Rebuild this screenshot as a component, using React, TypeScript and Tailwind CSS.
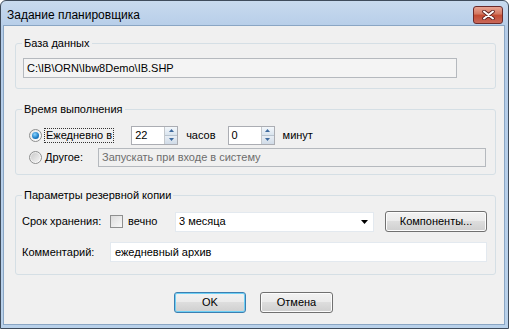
import React from "react";

const font = { fontFamily: '"Liberation Sans", Arial, sans-serif' };

function Group({ label, h, children }: { label: string; h: string; children: React.ReactNode }) {
  return (
    <div className={`relative border border-[#d5dfe5] rounded-[3px] ${h}`}>
      <span className="absolute left-[6px] top-[-7px] px-[2px] bg-[#f0f0f0] leading-[13px]">{label}</span>
      {children}
    </div>
  );
}

function Radio({ checked }: { checked?: boolean }) {
  return (
    <div className="w-[13px] h-[13px] rounded-full border border-[#8e8f8f] bg-gradient-to-br from-[#e6e6e6] to-[#ffffff] flex items-center justify-center shrink-0">
      {checked ? (
        <div className="w-[7px] h-[7px] rounded-full bg-[radial-gradient(circle_at_40%_35%,#8ad4ff,#1b7bc4_60%,#0b4f8c)]" />
      ) : (
        <div className="w-[9px] h-[9px] rounded-full bg-gradient-to-br from-[#cbcbcb] to-[#f4f4f4]" />
      )}
    </div>
  );
}

function Spin({ value }: { value: string }) {
  return (
    <div className="flex w-[47px] h-[19px] border border-[#abadb3] bg-white">
      <div className="flex-1 pl-[3px] leading-[17px]">{value}</div>
      <div className="w-[13px] flex flex-col border-l border-[#c4c8cc]">
        <div className="flex-1 flex items-center justify-center bg-gradient-to-b from-[#f3f7fb] to-[#d9e4ee] border-b border-[#b8c4d0]">
          <svg width="5" height="3" viewBox="0 0 5 3"><path d="M0 3 L2.5 0 L5 3 Z" fill="#3d6a9e" /></svg>
        </div>
        <div className="flex-1 flex items-center justify-center bg-gradient-to-b from-[#e8eef5] to-[#d0dbe7]">
          <svg width="5" height="3" viewBox="0 0 5 3"><path d="M0 0 L5 0 L2.5 3 Z" fill="#3d6a9e" /></svg>
        </div>
      </div>
    </div>
  );
}

function Btn({ children, w, focus }: { children: React.ReactNode; w: string; focus?: boolean }) {
  return (
    <div
      className={`${w} h-[21px] rounded-[3px] border ${focus ? "border-[#3c7fb1] shadow-[inset_0_0_0_1px_#6fd0f5]" : "border-[#707070] shadow-[inset_0_0_0_1px_#fcfcfc]"} bg-[linear-gradient(#f2f2f2_0%,#ebebeb_45%,#dddddd_50%,#cfcfcf_100%)] flex items-center justify-center leading-none`}
    >
      {children}
    </div>
  );
}

export default function App() {
  return (
    <div className="w-[509px] h-[329px] text-[11px] text-black" style={font}>
      <div className="w-full h-full border border-[#3f4c5c] rounded-t-[6px] bg-[linear-gradient(#c8daee,#b4cce8_30px,#b9d1ea)] flex flex-col">
        <div className="h-[24px] flex items-center justify-between pl-[6px] pr-[5px] shrink-0">
          <span className="text-[12px] pt-[4px]">Задание планировщика</span>
          <div className="w-[30px] h-[18px] mt-[3px] rounded-[3px] border border-[#6a2a2a] bg-[linear-gradient(#e8a493,#d2765f_45%,#c24a31_50%,#c9685a)] flex items-center justify-center">
            <svg width="13" height="10" viewBox="0 0 13 10">
              <path d="M2 1.5 L11 8.5 M11 1.5 L2 8.5" stroke="#5a2020" strokeWidth="3.6" strokeLinecap="round" />
              <path d="M2 1.5 L11 8.5 M11 1.5 L2 8.5" stroke="#ffffff" strokeWidth="2" strokeLinecap="round" />
            </svg>
          </div>
        </div>
        <div className="flex-1 ml-[2px] mr-[3px] mb-[3px] border border-[#8aa6c4] bg-[#f0f0f0] flex flex-col pl-[11px] pr-[8px] pt-[17px]">
          <Group label="База данных" h="h-[46px]">
            <div className="ml-[7px] mt-[14px] w-[434px] h-[20px] border border-[#b5b9be] bg-[#f4f4f4] pl-[3px] leading-[18px]">
              C:\IB\ORN\Ibw8Demo\IB.SHP
            </div>
          </Group>
          <div className="h-[20px]" />
          <Group label="Время выполнения" h="h-[66px]">
            <div className="flex flex-col pl-[13px] pt-[15px]">
              <div className="flex items-center h-[20px]">
                <Radio checked />
                <span className="ml-[2px] px-[1px] border border-dotted border-[#333] leading-[13px]">Ежедневно в</span>
                <div className="ml-[17px]"><Spin value="22" /></div>
                <span className="ml-[8px]">часов</span>
                <div className="ml-[12px]"><Spin value="0" /></div>
                <span className="ml-[8px]">минут</span>
              </div>
              <div className="flex items-center h-[19px] mt-[3px]">
                <Radio />
                <span className="ml-[3px] w-[53px]">Другое:</span>
                <div className="w-[388px] h-[19px] border border-[#b5b9be] bg-[#f0f0f0] text-[#6d6d6d] pl-[3px] leading-[17px]">
                  Запускать при входе в систему
                </div>
              </div>
            </div>
          </Group>
          <div className="h-[20px]" />
          <Group label="Параметры резервной копии" h="h-[80px]">
            <div className="flex flex-col pl-[6px] pt-[14px]">
              <div className="flex items-center h-[23px]">
                <span className="w-[88px]">Срок хранения:</span>
                <div className="w-[13px] h-[13px] border border-[#8e8f8f] bg-gradient-to-br from-[#dcdcdc] to-[#f8f8f8] shrink-0" />
                <span className="ml-[5px] w-[47px]">вечно</span>
                <div className="w-[199px] h-[20px] border border-[#e3e9ef] bg-white flex items-center justify-between pl-[3px] pr-[5px]">
                  <span>3 месяца</span>
                  <svg width="7" height="4" viewBox="0 0 7 4"><path d="M0 0 L7 0 L3.5 4 Z" fill="#000" /></svg>
                </div>
                <div className="ml-[11px]"><Btn w="w-[102px]">Компоненты...</Btn></div>
              </div>
              <div className="flex items-center h-[20px] mt-[9px]">
                <span className="w-[88px]">Комментарий:</span>
                <div className="w-[377px] h-[20px] border border-[#e3e9ef] bg-white pl-[4px] leading-[18px]">
                  ежедневный архив
                </div>
              </div>
            </div>
          </Group>
          <div className="flex justify-center gap-[14px] mt-[17px] pr-[4px]">
            <Btn w="w-[72px]" focus>OK</Btn>
            <Btn w="w-[73px]">Отмена</Btn>
          </div>
        </div>
      </div>
    </div>
  );
}
